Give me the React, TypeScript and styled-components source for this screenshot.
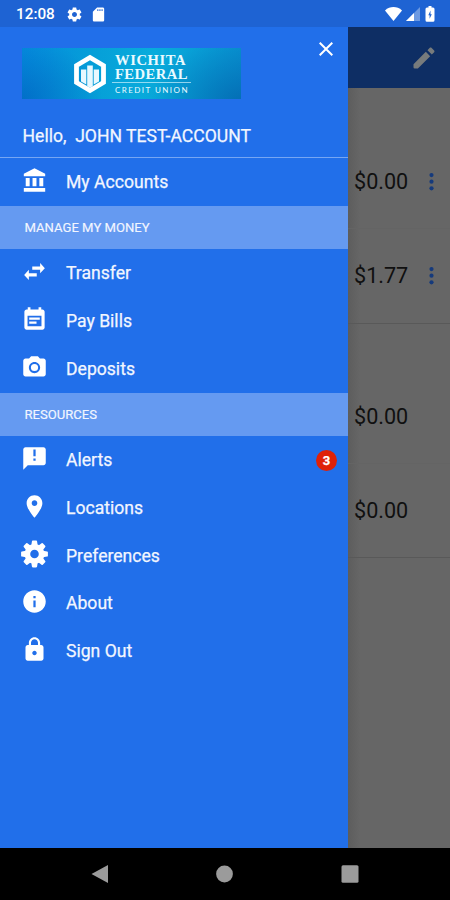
import React from 'react';
import styled, { createGlobalStyle } from 'styled-components';

const GlobalStyle = createGlobalStyle`
  * { box-sizing: border-box; }
  body { margin: 0; font-family: Roboto, sans-serif; background: #000; }
  svg { display: block; flex: none; }
`;

const Screen = styled.div`
  width: 450px;
  height: 900px;
  display: flex;
  flex-direction: column;
  overflow: hidden;
`;

const StatusBar = styled.header`
  height: 27px;
  flex: none;
  display: flex;
  align-items: center;
  padding: 1px 14px 0 16px;
  background: #1e63d3;
  color: #fff;
`;

const Clock = styled.span`
  width: 39px;
  margin-right: 11px;
  font-size: 15.3px;
  font-weight: 500;
  line-height: 20px;
  white-space: nowrap;
`;

const StatusIcons = styled.div`
  display: flex;
  align-items: center;
  gap: 7px;
`;

const SignalIcons = styled(StatusIcons)`
  margin-left: auto;
  gap: 4px;
`;

const Body = styled.div`
  flex: 1;
  min-height: 0;
  display: flex;
`;

const Drawer = styled.nav`
  width: 348px;
  flex: none;
  background: #216fea;
  color: #f2f6ff;
`;

const DrawerTop = styled.div`
  height: 131px;
  border-bottom: 1px solid #76a6f3;
  padding: 0 12px 0 22px;
`;

const BrandRow = styled.div`
  display: flex;
  justify-content: space-between;
  height: 72px;
  padding-top: 21px;
`;

const Brand = styled.div`
  width: 219px;
  height: 51px;
  display: flex;
  padding-left: 51px;
  color: #eafaff;
  background:
    radial-gradient(ellipse 100px 60px at 100% 105%, rgba(0, 82, 160, 0.55), transparent),
    radial-gradient(ellipse 80px 60px at 0% 100%, rgba(0, 84, 180, 0.5), transparent),
    linear-gradient(90deg, #048bdd 0%, #06a0d8 35%, #08acdc 60%, #0890cf 100%);
`;

const BrandMark = styled.svg`
  margin-top: 6px;
`;

const BrandWords = styled.div`
  display: flex;
  flex-direction: column;
  width: 79px;
  margin-left: 5px;
  padding-top: 6px;
`;

const BrandName = styled.span<{ $spacing: number }>`
  padding-left: 3px;
  font-family: 'Liberation Serif', serif;
  font-weight: 700;
  font-size: 14.6px;
  line-height: 13.6px;
  letter-spacing: ${(p) => p.$spacing}px;
  white-space: nowrap;
`;

const BrandSub = styled.span`
  margin-top: 1px;
  padding: 3px 0 0 3px;
  border-top: 1px solid rgba(220, 246, 255, 0.65);
  font-family: Lato, sans-serif;
  font-size: 8px;
  line-height: 9px;
  letter-spacing: 1.45px;
  white-space: nowrap;
`;

const CloseButton = styled.button`
  width: 20px;
  height: 20px;
  margin-top: -9px;
  padding: 3px;
  border: 0;
  background: none;
  color: #fff;
`;

const Greeting = styled.p`
  margin: 26px 0 0;
  padding-left: 0.5px;
  font-size: 17.6px;
  line-height: 22px;
  white-space: pre;
  -webkit-text-stroke: 0.25px currentColor;
`;

const Section = styled.h2`
  height: 43.8px;
  margin: 0;
  padding-left: 24.5px;
  background: #659af1;
  font-size: 13.1px;
  font-weight: 400;
  line-height: 43px;
  -webkit-text-stroke: 0.15px currentColor;
`;

const Item = styled.a`
  height: 47.7px;
  display: flex;
  align-items: center;
  padding: 0 11px 0 21px;
  font-size: 17.6px;
  -webkit-text-stroke: 0.25px currentColor;
`;

const IconSlot = styled.span`
  width: 45px;
  padding-bottom: 3px;
  color: #fff;
`;

const Badge = styled.span`
  margin-left: auto;
  width: 21px;
  height: 21px;
  border-radius: 50%;
  background: #df2108;
  color: #fff;
  font-size: 13px;
  font-weight: 700;
  line-height: 21px;
  text-align: center;
`;

const Backdrop = styled.main`
  flex: 1;
  background: linear-gradient(90deg, #5d5d5d 0, #666 12px);
`;

const AppBar = styled.div`
  height: 61px;
  display: flex;
  align-items: center;
  justify-content: flex-end;
  padding-right: 12px;
  background: #0e2e64;
  color: #777b7c;
`;

const Account = styled.div<{ $line?: boolean }>`
  height: 94.3px;
  display: flex;
  align-items: center;
  justify-content: space-between;
  padding: 0 16px 0 6px;
  border-bottom: 1px solid ${(p) => (p.$line ? '#595959' : '#646464')};
  font-size: 21.6px;
  color: #101010;
`;

const AccountGroup = styled.section<{ $top: number }>`
  padding-top: ${(p) => p.$top}px;
`;

const NavBar = styled.footer`
  height: 52px;
  flex: none;
  display: flex;
  align-items: center;
  justify-content: space-between;
  padding: 0 91px;
  background: #000;
  color: #9b9b9b;
`;

const paths = {
  bank: 'M4.2 9.800v7.200h3.500v-7.200zm6.050 0v7.200h3.500v-7.200zM2.500 22h19v-3.300h-19v3.300zM16.300 9.800v7.200h3.500v-7.200zM12 1L2.500 6v2.300h19V6L12 1z',
  swap: 'M6.99 10.400L2.800 15l4.190 4.600v-3.200H14v-2.800H6.990v-3.200zM21.200 9l-4.190-4.600v3.200H10v2.800h7.010v3.200L21.200 9z',
  calendar:
    'M16.700 10.200H7.300v2h9.400v-2zM19 3h-1V1h-2.400v2H8.400V1H6v2H5c-1.110 0-1.990.9-1.990 2L3 19c0 1.100.89 2 2 2h14c1.100 0 2-.9 2-2V5c0-1.100-.9-2-2-2zm-.8 15H5.800V8.700h12.400v9.300zM13.800 13.800H7.300v2h6.500v-2z',
  camera:
    'M12 8.800a3.200 3.200 0 1 0 0 6.400 3.200 3.200 0 1 0 0-6.400zM9 2L7.170 4H4c-1.100 0-2 .9-2 2v12c0 1.100.9 2 2 2h16c1.100 0 2-.9 2-2V6c0-1.100-.9-2-2-2h-3.170L15 2H9zm3 15c-2.760 0-5-2.240-5-5s2.240-5 5-5 5 2.240 5 5-2.240 5-5 5z',
  alert:
    'M20 2H4c-1.1 0-1.99.9-1.99 2L2 22l4-4h14c1.1 0 2-.9 2-2V4c0-1.1-.9-2-2-2zm-7 12h-2v-2h2v2zm0-4h-2V4h2v6z',
  pin: 'M12 2C8.13 2 5 5.13 5 9c0 5.25 7 13 7 13s7-7.75 7-13c0-3.87-3.13-7-7-7zm0 9.5c-1.38 0-2.5-1.12-2.5-2.5s1.12-2.5 2.5-2.5 2.5 1.12 2.5 2.5-1.12 2.5-2.5 2.5z',
  info: 'M12 2C6.48 2 2 6.48 2 12s4.48 10 10 10 10-4.48 10-10S17.52 2 12 2zm1 15h-2v-6h2v6zm0-8h-2V7h2v2z',
  lock: 'M18 8h-1V6c0-2.76-2.24-5-5-5S7 3.24 7 6v2H6c-1.1 0-2 .9-2 2v10c0 1.1.9 2 2 2h12c1.1 0 2-.9 2-2V10c0-1.1-.9-2-2-2zm-6 9c-1.1 0-2-.9-2-2s.9-2 2-2 2 .9 2 2-.9 2-2 2zm3.1-9H8.9V6c0-1.71 1.39-3.1 3.1-3.1 1.71 0 3.1 1.39 3.1 3.1v2z',
  gear: 'M19.43 12.98c.04-.32.07-.64.07-.98s-.03-.66-.07-.98l2.11-1.65c.19-.15.24-.42.12-.64l-2-3.46c-.12-.22-.39-.3-.61-.22l-2.49 1c-.52-.4-1.08-.73-1.69-.98l-.38-2.65C14.46 2.18 14.25 2 14 2h-4c-.25 0-.46.18-.49.42l-.38 2.65c-.61.25-1.17.59-1.69.98l-2.49-1c-.23-.09-.49 0-.61.22l-2 3.46c-.13.22-.07.49.12.64l2.11 1.65c-.04.32-.07.65-.07.98s.03.66.07.98l-2.11 1.65c-.19.15-.24.42-.12.64l2 3.46c.12.22.39.3.61.22l2.49-1c.52.4 1.08.73 1.69.98l.38 2.65c.03.24.24.42.49.42h4c.25 0 .46-.18.49-.42l.38-2.65c.61-.25 1.17-.59 1.69-.98l2.49 1c.23.09.49 0 .61-.22l2-3.46c.12-.22.07-.49-.12-.64l-2.11-1.65zM12 15.5c-1.93 0-3.5-1.57-3.5-3.5s1.57-3.5 3.5-3.5 3.5 1.57 3.5 3.5-1.57 3.5-3.5 3.5z',
  sdCard:
    'M18 2h-8L4.020 8 4 20c0 1.100.9 2 2 2h12c1.100 0 2-.9 2-2V4c0-1.100-.9-2-2-2zM11.800 7h-1.500V4.500h1.500zM14.800 7h-1.500V4.500h1.500zM17.800 7h-1.500V4.500h1.500z',
  pencil:
    'M3 17.25V20q0 1 1 1h2.750L17.300 10.450l-3.750-3.750L3 17.250zM20.71 7.04c.39-.39.39-1.02 0-1.41l-2.34-2.34c-.39-.39-1.02-.39-1.41 0l-2 2 3.75 3.75 2-2z',
};

type IconName = keyof typeof paths;

const Icon = ({ name, size = 27 }: { name: IconName; size?: number }) => (
  <svg width={size} height={size} viewBox="0 0 24 24" fill="currentColor">
    <path fillRule="evenodd" d={paths[name]} />
  </svg>
);

const CogIcon = () => (
  <svg width="27" height="28" viewBox="-13.5 -14 27 28" fill="currentColor">
    <circle r="7.1" fill="none" stroke="currentColor" strokeWidth="5.6" />
    {[0, 45, 90, 135, 180, 225, 270, 315].map((angle) => (
      <path
        key={angle}
        transform={`rotate(${angle})`}
        d="M-3.2-8.500L-2.600-12.600Q-2.500-13.400-1.700-13.400H1.700Q2.500-13.400 2.600-12.600L3.200-8.500z"
      />
    ))}
  </svg>
);

const MoreDots = () => (
  <svg width="5" height="18" viewBox="0 0 5 18" fill="#153a7c">
    <circle cx="2.5" cy="2.1" r="2.1" />
    <circle cx="2.5" cy="8.7" r="2.1" />
    <circle cx="2.5" cy="15.3" r="2.1" />
  </svg>
);

const MenuItem = ({ icon, label, badge }: { icon: IconName | 'cog'; label: string; badge?: number }) => (
  <Item>
    <IconSlot>{icon === 'cog' ? <CogIcon /> : <Icon name={icon} />}</IconSlot>
    {label}
    {badge !== undefined && <Badge>{badge}</Badge>}
  </Item>
);

export default function App() {
  return (
    <Screen>
      <GlobalStyle />
      <StatusBar>
        <Clock>12:08</Clock>
        <StatusIcons>
          <Icon name="gear" size={17} />
          <Icon name="sdCard" size={17} />
        </StatusIcons>
        <SignalIcons>
          <svg width="17" height="14" viewBox="0 0 17 14" fill="#fff">
            <path d="M0 3.4C5-1 12-1 17 3.4L8.5 14z" />
          </svg>
          <svg width="14" height="14" viewBox="0 0 14 14" fill="#fff">
            <path d="M0 14L14 0v14z" opacity=".35" />
            <path d="M0 14L8 6v8z" />
          </svg>
          <svg width="12" height="16" viewBox="0 0 12 16" fill="#fff">
            <path
              fillRule="evenodd"
              d="M4.500 0h3v1.400H9q1.500 0 1.500 1.500v11.400q0 1.500-1.500 1.500H3q-1.500 0-1.500-1.500V2.900q0-1.500 1.500-1.500h1.500zM6.500 4.600L4.300 9.200h1.300v3.500l2.200-4.500H6.500z"
            />
          </svg>
        </SignalIcons>
      </StatusBar>
      <Body>
        <Drawer>
          <DrawerTop>
            <BrandRow>
              <Brand>
                <BrandMark width="34" height="40" viewBox="0 0 34 40">
                  <path d="M17 3.500L30.500 11.500V28.500L17 36.500L3.500 28.500V11.500z" fill="none" stroke="#fff" strokeWidth="4.800" />
                  <path d="M8 15.500h5.300v15l-5.300-3zM14.200 11.500h5.600v20.500l-2.800 2-2.800-2zM20.700 15.500h5.300v12l-5.300 3z" fill="#e8f8ff" />
                </BrandMark>
                <BrandWords>
                  <BrandName $spacing={0.6}>WICHITA</BrandName>
                  <BrandName $spacing={0.45}>FEDERAL</BrandName>
                  <BrandSub>CREDIT UNION</BrandSub>
                </BrandWords>
              </Brand>
              <CloseButton aria-label="Close">
                <svg width="14" height="14" viewBox="0 0 14 14" stroke="currentColor" strokeWidth="2">
                  <path d="M.7.7l12.600 12.600M13.300.7L.7 13.300" />
                </svg>
              </CloseButton>
            </BrandRow>
            <Greeting>{'Hello,  JOHN TEST-ACCOUNT'}</Greeting>
          </DrawerTop>
          <MenuItem icon="bank" label="My Accounts" />
          <Section>MANAGE MY MONEY</Section>
          <MenuItem icon="swap" label="Transfer" />
          <MenuItem icon="calendar" label="Pay Bills" />
          <MenuItem icon="camera" label="Deposits" />
          <Section>RESOURCES</Section>
          <MenuItem icon="alert" label="Alerts" badge={3} />
          <MenuItem icon="pin" label="Locations" />
          <MenuItem icon="cog" label="Preferences" />
          <MenuItem icon="info" label="About" />
          <MenuItem icon="lock" label="Sign Out" />
        </Drawer>
        <Backdrop>
          <AppBar>
            <Icon name="pencil" size={28} />
          </AppBar>
          <AccountGroup $top={47}>
            <Account>
              $0.00
              <MoreDots />
            </Account>
            <Account $line>
              $1.77
              <MoreDots />
            </Account>
          </AccountGroup>
          <AccountGroup $top={46}>
            <Account>$0.00</Account>
            <Account $line>$0.00</Account>
          </AccountGroup>
        </Backdrop>
      </Body>
      <NavBar>
        <svg width="17" height="18" viewBox="0 0 17 18" fill="currentColor">
          <path d="M.5 9L17 0v18z" />
        </svg>
        <svg width="17" height="18" viewBox="0 0 17 18" fill="currentColor">
          <circle cx="8.500" cy="9" r="8.400" />
        </svg>
        <svg width="18" height="18" viewBox="0 0 18 18" fill="currentColor">
          <rect x=".5" y=".2" width="17" height="17.500" rx="1.500" />
        </svg>
      </NavBar>
    </Screen>
  );
}
